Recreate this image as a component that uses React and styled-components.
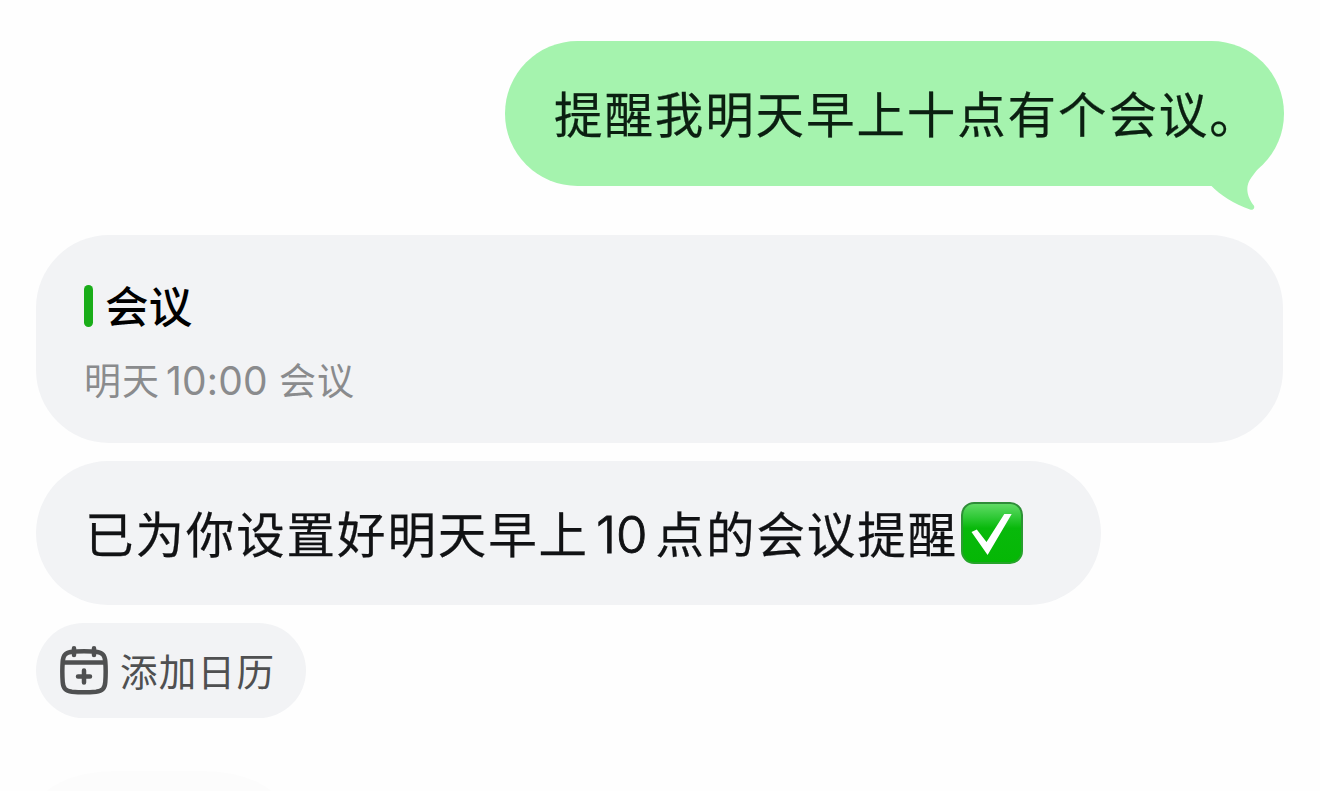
import React from 'react';
import styled, { createGlobalStyle } from 'styled-components';

const colors = {
  page: '#fefefe',
  sent: '#a5f3ae',
  received: '#f2f3f5',
  accent: '#1aad19',
  ink: '#111214',
  sentInk: '#0b1f11',
  muted: '#8a8b8d',
  action: '#4f5051',
};

const App = () => (
  <>
    <GlobalStyle />
    <Chat>
      <SentBubble>
        <Message tone='sent'>提醒我明天早上十点有个会议。</Message>
        <Tail />
      </SentBubble>

      <EventCard>
        <EventTitle>
          <Marker />
          <TitleText>会议</TitleText>
        </EventTitle>
        <EventTime>
          明天<TimeDigits>10:00</TimeDigits>会议
        </EventTime>
      </EventCard>

      <ReceivedBubble>
        <Message>
          已为你设置好明天早上<Digits>10</Digits>点的会议提醒
        </Message>
        <CheckEmoji />
      </ReceivedBubble>

      <ActionButton>
        <CalendarIcon />
        <ActionLabel>添加日历</ActionLabel>
      </ActionButton>

      <NextBubble />
    </Chat>
  </>
);

const Tail = () => (
  <TailShape width='50' height='44' viewBox='0 0 50 44'>
    <path d='M2 17.400 C11 27 25 35.500 41 41.600 C44 42.600 46.300 40.300 44.800 37.600 C40 31 34.500 20.500 42.200 9.800 C44.500 6.500 47 3.500 49.300 0 L20 0 L2 10 Z' />
  </TailShape>
);

const CalendarIcon = () => (
  <svg width='48' height='50' viewBox='0 0 48 50' fill='none' stroke='currentColor' strokeWidth='4.500' strokeLinecap='round'>
    <path d='M24 5.300 C30 5.300 33 5.400 36 5.800 C42.500 6.600 44.800 9 45.300 15.500 C45.800 22 45.800 29 45.300 36 C44.800 42.500 42.500 44.900 36 45.700 C29 46.400 19 46.400 12 45.700 C5.500 44.900 3.200 42.500 2.700 36 C2.200 29 2.200 22 2.700 15.500 C3.200 9 5.500 6.600 12 5.800 C15 5.400 18 5.300 24 5.300 Z' />
    <path d='M3.500 16.500 H44.500' strokeLinecap='butt' />
    <path d='M14 2.300 V9 M34 2.300 V9' />
    <path d='M18 30.500 H30 M24 24.500 V36.500' />
  </svg>
);

const CheckEmoji = () => (
  <Emoji width='62' height='62' viewBox='0 0 62 62' role='img' aria-label='✅'>
    <defs>
      <linearGradient id='emojiFace' x1='0' y1='0' x2='0' y2='1'>
        <stop offset='0' stopColor='#63dc68' />
        <stop offset='.24' stopColor='#2fc936' />
        <stop offset='.42' stopColor='#08b90b' />
        <stop offset='1' stopColor='#05b705' />
      </linearGradient>
      <linearGradient id='emojiEdge' x1='0' y1='0' x2='0' y2='1'>
        <stop offset='0' stopColor='#2f8c38' />
        <stop offset='1' stopColor='#26a52a' />
      </linearGradient>
    </defs>
    <rect x='1' y='1' width='60' height='60' rx='12' fill='url(#emojiFace)' stroke='url(#emojiEdge)' strokeWidth='2' />
    <path d='M10.500 30 L15.800 27.400 L25.500 40 L43.300 12 H50.700 L26.600 53 Z' fill='#fff' />
  </Emoji>
);

const GlobalStyle = createGlobalStyle`
  body {
    margin: 0;
    overflow: hidden;
    background-color: ${colors.page};
    font-family: "Noto Sans CJK SC", sans-serif;
  }
`;

const Chat = styled.main`
  box-sizing: border-box;
  display: flex;
  flex-direction: column;
  align-items: flex-start;
  height: 791px;
  padding: 41px 36px 0;
  overflow: hidden;
`;

const Bubble = styled.div`
  box-sizing: border-box;
  flex-shrink: 0;
  display: flex;
  align-items: center;
  background-color: ${colors.received};
  border-radius: 73px;
`;

const SentBubble = styled(Bubble)`
  position: relative;
  align-self: flex-end;
  width: 779px;
  height: 145px;
  padding-left: 49px;
  background-color: ${colors.sent};
`;

const TailShape = styled.svg`
  position: absolute;
  right: 25px;
  bottom: -26px;
  fill: ${colors.sent};
`;

const Message = styled.p`
  margin: 0;
  padding-bottom: ${props => props.tone === 'sent' ? 4 : 2}px;
  color: ${props => props.tone === 'sent' ? colors.sentInk : colors.ink};
  font-size: 48.500px;
  line-height: 70px;
  letter-spacing: 1.900px;
  white-space: nowrap;
  -webkit-text-stroke: .250px currentColor;
`;

const Digits = styled.span`
  margin: 0 8px 0 7px;
  font-family: Inter, sans-serif;
  font-size: 51px;
  font-weight: 300;
  line-height: 1;
  letter-spacing: 0;
  -webkit-text-stroke: .900px currentColor;
`;

const EventCard = styled(Bubble)`
  flex-direction: column;
  align-items: flex-start;
  width: 1247px;
  height: 208px;
  margin-top: 49px;
  padding: 41px 48px 0;
`;

const EventTitle = styled.div`
  display: flex;
  align-items: center;
  gap: 12px;
  height: 60px;
`;

const TitleText = styled.span`
  padding-bottom: 2px;
  color: #000;
  font-size: 43.500px;
  font-weight: 500;
  line-height: 60px;
  letter-spacing: .300px;
`;

const Marker = styled.i`
  width: 9px;
  height: 42px;
  background-color: ${colors.accent};
  border-radius: 5px;
`;

const EventTime = styled.div`
  margin-top: 13px;
  color: ${colors.muted};
  font-size: 37px;
  font-weight: 400;
  line-height: 60px;
  letter-spacing: 1px;
  white-space: nowrap;
`;

const TimeDigits = styled.span`
  margin: 0 11px 0 6px;
  font-family: Inter, sans-serif;
  font-size: 39px;
  line-height: 1;
  letter-spacing: .200px;
`;

const ReceivedBubble = styled(Bubble)`
  width: 1065px;
  height: 144px;
  margin-top: 18px;
  padding-left: 49px;
`;

const Emoji = styled.svg`
  flex-shrink: 0;
  margin-left: 3px;
`;

const ActionButton = styled.button`
  flex-shrink: 0;
  display: flex;
  align-items: center;
  gap: 12px;
  width: 270px;
  height: 95px;
  margin-top: 18px;
  padding: 0 0 0 24px;
  color: ${colors.action};
  background-color: ${colors.received};
  border: none;
  border-radius: 48px;
  font-family: inherit;
  cursor: pointer;
`;

const ActionLabel = styled.span`
  padding-bottom: 1px;
  font-size: 37.500px;
  line-height: 54px;
  letter-spacing: 1.300px;
  white-space: nowrap;
`;

const NextBubble = styled.div`
  flex-shrink: 0;
  width: 246px;
  height: 80px;
  margin-top: 53px;
  background-color: #fcfcfc;
  border-radius: 80px / 40px;
`;

export default App;
